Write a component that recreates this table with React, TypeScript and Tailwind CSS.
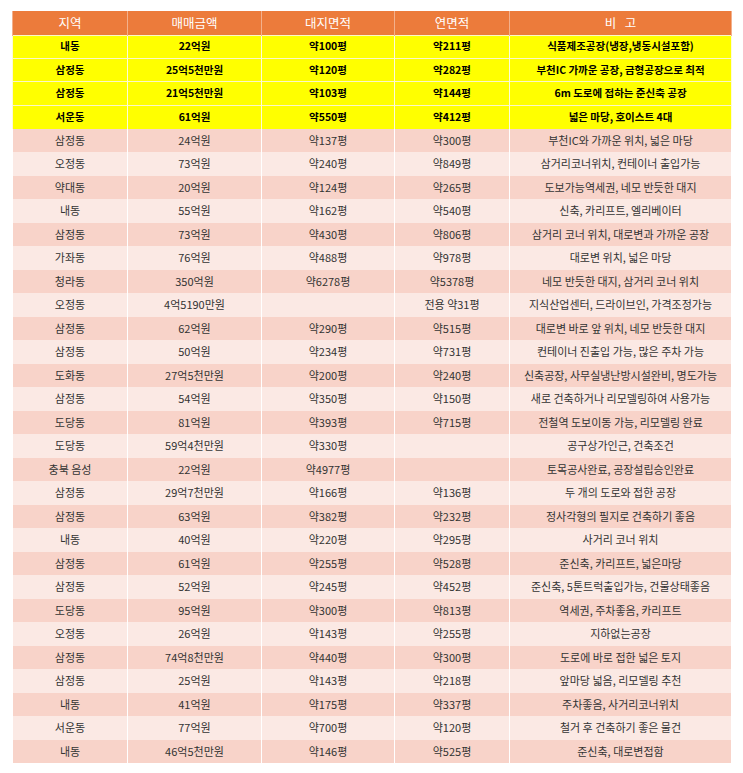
const highlighted = [
  ["내동", "22억원", "약100평", "약211평", "식품제조공장(냉장,냉동시설포함)"],
  ["삼정동", "25억5천만원", "약120평", "약282평", "부천IC 가까운 공장, 금형공장으로 최적"],
  ["삼정동", "21억5천만원", "약103평", "약144평", "6m 도로에 접하는 준신축 공장"],
  ["서운동", "61억원", "약550평", "약412평", "넓은 마당, 호이스트 4대"],
]

const rows = [
  ["삼정동", "24억원", "약137평", "약300평", "부천IC와 가까운 위치, 넓은 마당"],
  ["오정동", "73억원", "약240평", "약849평", "삼거리코너위치, 컨테이너 출입가능"],
  ["약대동", "20억원", "약124평", "약265평", "도보가능역세권, 네모 반듯한 대지"],
  ["내동", "55억원", "약162평", "약540평", "신축, 카리프트, 엘리베이터"],
  ["삼정동", "73억원", "약430평", "약806평", "삼거리 코너 위치, 대로변과 가까운 공장"],
  ["가좌동", "76억원", "약488평", "약978평", "대로변 위치, 넓은 마당"],
  ["청라동", "350억원", "약6278평", "약5378평", "네모 반듯한 대지, 삼거리 코너 위치"],
  ["오정동", "4억5190만원", "", "전용 약31평", "지식산업센터, 드라이브인, 가격조정가능"],
  ["삼정동", "62억원", "약290평", "약515평", "대로변 바로 앞 위치, 네모 반듯한 대지"],
  ["삼정동", "50억원", "약234평", "약731평", "컨테이너 진출입 가능, 많은 주차 가능"],
  ["도화동", "27억5천만원", "약200평", "약240평", "신축공장, 사무실냉난방시설완비, 명도가능"],
  ["삼정동", "54억원", "약350평", "약150평", "새로 건축하거나 리모델링하여 사용가능"],
  ["도당동", "81억원", "약393평", "약715평", "전철역 도보이동 가능, 리모델링 완료"],
  ["도당동", "59억4천만원", "약330평", "", "공구상가인근, 건축조건"],
  ["충북 음성", "22억원", "약4977평", "", "토목공사완료, 공장설립승인완료"],
  ["삼정동", "29억7천만원", "약166평", "약136평", "두 개의 도로와 접한 공장"],
  ["삼정동", "63억원", "약382평", "약232평", "정사각형의 필지로 건축하기 좋음"],
  ["내동", "40억원", "약220평", "약295평", "사거리 코너 위치"],
  ["삼정동", "61억원", "약255평", "약528평", "준신축, 카리프트, 넓은마당"],
  ["삼정동", "52억원", "약245평", "약452평", "준신축, 5톤트럭출입가능, 건물상태좋음"],
  ["도당동", "95억원", "약300평", "약813평", "역세권, 주차좋음, 카리프트"],
  ["오정동", "26억원", "약143평", "약255평", "지하없는공장"],
  ["삼정동", "74억8천만원", "약440평", "약300평", "도로에 바로 접한 넓은 토지"],
  ["삼정동", "25억원", "약143평", "약218평", "앞마당 넓음, 리모델링 추천"],
  ["내동", "41억원", "약175평", "약337평", "주차좋음, 사거리코너위치"],
  ["서운동", "77억원", "약700평", "약120평", "철거 후 건축하기 좋은 물건"],
  ["내동", "46억5천만원", "약146평", "약525평", "준신축, 대로변접함"],
]

const widths = ["w-[115px]", "w-[134px]", "w-[133px]", "w-[115px]", "w-[222px]"]

export default function App() {
  return (
    <div
      className="min-h-screen bg-white pt-[11px] pl-[12px]"
      style={{ fontFamily: '"Noto Sans CJK KR", "Noto Sans", sans-serif' }}
    >
      <table className="w-[719px] table-fixed border-collapse text-center">
        <colgroup>
          {widths.map((w, i) => (
            <col key={i} className={w} />
          ))}
        </colgroup>
        <thead>
          <tr className="h-[24px] bg-[#ec7b3b] text-[12.5px] text-white">
            {["지역", "매매금액", "대지면적", "연면적", "비   고"].map((h, i) => (
              <th key={i} className="whitespace-pre border-x border-[#f3b08c] font-normal leading-none">
                {h}
              </th>
            ))}
          </tr>
        </thead>
        <tbody>
          {highlighted.map((r, i) => (
            <tr key={i} className="h-[23.4px] border-t border-[#fbf7c8] bg-[#ffff00] text-[10.5px] font-bold text-black">
              {r.map((c, j) => (
                <td key={j} className="border-x border-[#fdfbd8] leading-none">
                  {c}
                </td>
              ))}
            </tr>
          ))}
          {rows.map((r, i) => (
            <tr
              key={i}
              className={`h-[23.5px] text-[11px] text-[#333333] ${i % 2 === 0 ? "bg-[#f8d3c9]" : "bg-[#fbe9e4]"}`}
            >
              {r.map((c, j) => (
                <td key={j} className="border-x border-white leading-none">
                  {c}
                </td>
              ))}
            </tr>
          ))}
        </tbody>
      </table>
    </div>
  )
}
